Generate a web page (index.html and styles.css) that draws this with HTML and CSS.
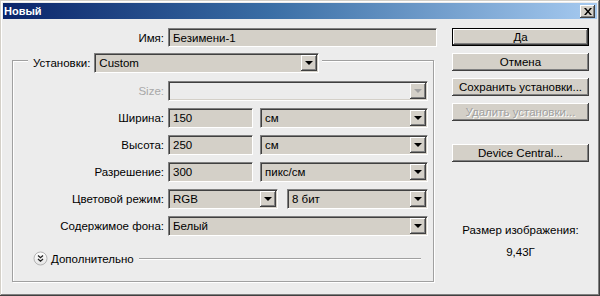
FILE: index.html
```html
<!DOCTYPE html>
<html lang="ru">
<head>
<meta charset="utf-8">
<title>Новый</title>
<link rel="stylesheet" href="styles.css">
</head>
<body>
<div class="window">
  <div class="titlebar">
    <span class="title">Новый</span>
    <span class="close">
      <svg width="8" height="7" viewBox="0 0 8 7"><path d="M0 0h2l2 2.5 2-2.5h2l-3 3.5 3 3.5h-2l-2-2.5-2 2.5h-2l3-3.5z" fill="#000"/></svg>
    </span>
  </div>
  <div class="content">
    <div class="left">
      <div class="name-row">
        <span class="label">Имя:</span>
        <div class="field text">Безимени-1</div>
      </div>
      <div class="group">
        <div class="legend">
          <span class="label">Установки:</span>
          <div class="field select w-preset"><span class="value">Custom</span><span class="arrow"></span></div>
        </div>
        <div class="rows">
          <span class="label disabled">Size:</span>
          <div class="field select disabled-field"><span class="value"></span><span class="arrow"></span></div>

          <span class="label">Ширина:</span>
          <div class="pair"><div class="field text w-num">150</div><div class="field select grow"><span class="value">см</span><span class="arrow"></span></div></div>

          <span class="label">Высота:</span>
          <div class="pair"><div class="field text w-num">250</div><div class="field select grow"><span class="value">см</span><span class="arrow"></span></div></div>

          <span class="label">Разрешение:</span>
          <div class="pair"><div class="field text w-num">300</div><div class="field select grow"><span class="value">пикс/см</span><span class="arrow"></span></div></div>

          <span class="label">Цветовой режим:</span>
          <div class="pair wide-gap"><div class="field select w-mode"><span class="value">RGB</span><span class="arrow"></span></div><div class="field select grow"><span class="value">8 бит</span><span class="arrow"></span></div></div>

          <span class="label">Содержимое фона:</span>
          <div class="field select"><span class="value">Белый</span><span class="arrow"></span></div>
        </div>
        <div class="advanced">
          <svg class="expand" width="15" height="15" viewBox="0 0 15 15">
            <defs><linearGradient id="g" x1="0" y1="0" x2="0" y2="1"><stop offset="0" stop-color="#ffffff"/><stop offset="1" stop-color="#e4e4e4"/></linearGradient></defs>
            <circle cx="7.5" cy="7.5" r="6.5" fill="url(#g)" stroke="#b4b4b4"/>
            <path d="M5 4.5l2.5 2.2 2.5-2.2M5 8l2.5 2.2 2.5-2.2" fill="none" stroke="#222" stroke-width="1.3"/>
          </svg>
          <span class="adv-label">Дополнительно</span>
          <span class="adv-line"></span>
        </div>
      </div>
    </div>
    <div class="right">
      <div class="btn default">Да</div>
      <div class="btn">Отмена</div>
      <div class="btn">Сохранить установки...</div>
      <div class="btn btn-disabled">Удалить установки...</div>
      <div class="btn btn-device">Device Central...</div>
      <div class="size-caption">Размер изображения:</div>
      <div class="size-value">9,43Г</div>
    </div>
  </div>
</div>
</body>
</html>
```

FILE: styles.css
```css
* { box-sizing: border-box; }
html, body {
  margin: 0;
  padding: 0;
  width: 600px;
  height: 296px;
  overflow: hidden;
  background: #ececec;
}
body {
  font-family: "Liberation Sans", Arial, sans-serif;
  font-size: 11.5px;
  color: #000;
}
.window {
  width: 600px;
  height: 296px;
  padding: 3px;
  background: #ececec;
  box-shadow: inset -1px -1px #404040, inset 1px 1px #d4d0c8, inset -2px -2px #808080, inset 2px 2px #ffffff;
}
.titlebar {
  height: 16px;
  display: flex;
  align-items: center;
  justify-content: space-between;
  padding: 0 2px 0 1px;
  background: linear-gradient(to right, #0a246a 0%, #3a6ea5 45%, #a6caf0 100%);
}
.title {
  color: #fff;
  font-weight: bold;
  font-size: 11px;
  font-family: "Liberation Sans", Arial, sans-serif;
}
.close {
  width: 15px;
  height: 13px;
  background: #d4d0c8;
  display: flex;
  align-items: center;
  justify-content: center;
  box-shadow: inset -1px -1px #404040, inset 1px 1px #ffffff, inset -2px -2px #808080;
}
.content {
  display: flex;
  padding-top: 9px;
}
.left {
  width: 434px;
}
.label {
  text-align: right;
  white-space: nowrap;
  line-height: 20px;
}
.label.disabled { color: #a8a8a8; }
.name-row {
  display: grid;
  grid-template-columns: 161px 269px;
  column-gap: 4px;
}
.name-row .field { height: 19px; }
.field {
  height: 20px;
  background: #d4d0c8;
  border: 1px solid;
  border-color: #808080 #ffffff #ffffff #808080;
  box-shadow: inset 1px 1px #404040, inset -1px -1px #d4d0c8;
  display: flex;
  align-items: center;
  padding-left: 4px;
  white-space: nowrap;
  overflow: hidden;
}
.field.select { padding-right: 1px; }
.field .value { flex: 1; }
.arrow {
  width: 16px;
  height: 16px;
  background: #d4d0c8;
  box-shadow: inset -1px -1px #404040, inset 1px 1px #ffffff, inset -2px -2px #808080;
  position: relative;
  flex: none;
}
.arrow::after {
  content: "";
  position: absolute;
  left: 4px;
  top: 6px;
  border-left: 4px solid transparent;
  border-right: 4px solid transparent;
  border-top: 4px solid #000;
}
.disabled-field { background: #ececec; }
.disabled-field .arrow::after { border-top-color: #a0a0a0; }
.group {
  margin: 12px 3px 0 9px;
  height: 222px;
  border: 1px solid #a0a0a0;
  box-shadow: inset 1px 1px #ffffff, 1px 1px #ffffff;
}
.legend {
  display: flex;
  width: max-content;
  gap: 4px;
  margin: -8px 0 0 15px;
  padding: 0 3px 0 5px;
  background: #ececec;
}
.w-preset { width: 225px; }
.rows {
  display: grid;
  grid-template-columns: 151px 260px;
  column-gap: 4px;
  row-gap: 7px;
  margin-top: 8px;
}
.pair {
  display: flex;
  gap: 7px;
}
.pair.wide-gap { gap: 9px; }
.w-num { width: 85px; }
.w-mode { width: 110px; }
.grow { flex: 1; }
.advanced {
  display: flex;
  align-items: center;
  margin: 15px 0 0 20px;
  height: 15px;
}
.adv-label {
  margin-left: 3px;
}
.adv-line {
  flex: none;
  width: 282px;
  margin-left: 5px;
  height: 2px;
  border-top: 1px solid #a0a0a0;
  border-bottom: 1px solid #ffffff;
}
.right {
  margin-left: 15px;
  width: 137px;
  display: flex;
  flex-direction: column;
  gap: 7px;
}
.btn {
  height: 18px;
  background: #d4d0c8;
  text-align: center;
  line-height: 18px;
  white-space: nowrap;
  box-shadow: inset -1px -1px #404040, inset 1px 1px #ffffff, inset -2px -2px #808080;
}
.btn.default {
  box-shadow: inset 0 0 0 1px #000, inset -2px -2px #404040, inset 2px 2px #ffffff, inset -3px -3px #808080;
}
.btn-disabled {
  color: #a0a0a0;
  text-shadow: 1px 1px #ffffff;
}
.btn-device { margin-top: 16px; }
.size-caption {
  margin-top: 54px;
  text-align: center;
  line-height: 14px;
}
.size-value {
  margin-top: 1px;
  text-align: center;
  line-height: 14px;
}
```
